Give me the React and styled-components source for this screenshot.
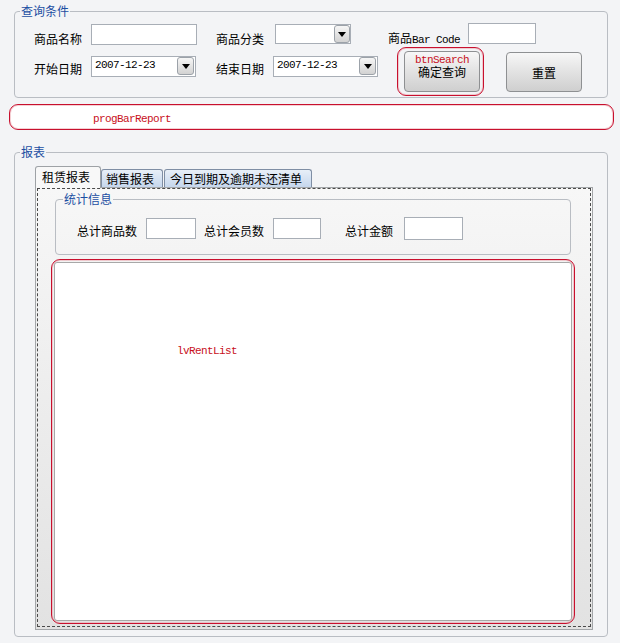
import React from 'react';
import styled, { createGlobalStyle } from 'styled-components';

const GlobalStyle = createGlobalStyle`
  html, body {
    margin: 0;
    padding: 0;
  }
  body {
    background: #f3f4f6;
    font-family: "Noto Sans CJK SC", "Noto Sans", sans-serif;
    font-size: 12px;
    color: #000;
  }
`;

const Page = styled.div`
  width: 620px;
  height: 643px;
  padding-top: 4px;
  box-sizing: border-box;
  overflow: hidden;
`;

const Group = styled.fieldset`
  margin: ${p => p.$top || 0}px 0 0 ${p => p.$left}px;
  width: ${p => p.$width}px;
  height: ${p => p.$height}px;
  box-sizing: border-box;
  padding: ${p => p.$pad};
  border: 1px solid #b9bdc3;
  border-radius: 4px;
  min-width: 0;
  display: flex;
  flex-direction: column;
`;

const Legend = styled.legend`
  margin-left: ${p => p.$offset}px;
  padding: 0 1px;
  line-height: 14px;
  font-size: 12px;
  color: #1b4ea2;
`;

const Row = styled.div`
  display: flex;
  align-items: flex-start;
  height: ${p => p.$h}px;
  padding-left: ${p => p.$pl}px;
`;

const Label = styled.span`
  margin: ${p => p.$top}px 0 0 ${p => p.$left || 0}px;
  line-height: 14px;
  white-space: nowrap;
`;

const Mono = styled.span`
  font-family: "Liberation Mono", "DejaVu Sans Mono", monospace;
  font-size: 11px;
  letter-spacing: -0.6px;
`;

const RedMono = styled(Mono)`
  color: #c8101c;
  line-height: 10px;
`;

const TextBox = styled.div`
  margin: ${p => p.$top}px 0 0 ${p => p.$left}px;
  width: ${p => p.$w}px;
  height: ${p => p.$h}px;
  box-sizing: border-box;
  border: 1px solid #a8aeb6;
  background: #fff;
  display: flex;
  justify-content: space-between;
  align-items: flex-start;
  padding: ${p => p.$pad || 0};
`;

const DateText = styled(Mono)`
  line-height: 13px;
  padding: 2px 0 0 3px;
`;

const DropBtn = styled.span`
  width: ${p => p.$w}px;
  height: ${p => p.$h}px;
  box-sizing: border-box;
  border: 1px solid #9ca2a9;
  border-radius: 3px;
  background: linear-gradient(#f6f6f6, #d2d2d2);
  display: flex;
  align-items: center;
  justify-content: center;

  &::after {
    content: '';
    border-left: 4px solid transparent;
    border-right: 4px solid transparent;
    border-top: 5px solid #000;
  }
`;

const Annot = styled.div`
  box-sizing: border-box;
  border: 1px solid #c8102e;
  border-radius: 9px;
  box-shadow: inset 0 0 0 1px rgba(232, 150, 160, 0.45);
`;

const SearchWrap = styled(Annot)`
  margin-left: 19px;
  width: 87px;
  height: 49px;
  padding: 3px 0 0 6px;
`;

const Button = styled.button`
  margin: ${p => p.$top || 0}px 0 0 ${p => p.$left || 0}px;
  width: 76px;
  height: ${p => p.$h}px;
  box-sizing: border-box;
  border: 1px solid #8e9092;
  border-radius: 4px;
  background: linear-gradient(#f7f7f7, #e2e2e2 50%, #cfcfcf);
  font-family: inherit;
  font-size: 12px;
  color: #000;
  padding: ${p => p.$pad || 0};
  display: flex;
  flex-direction: column;
  align-items: center;
  justify-content: ${p => (p.$pad ? 'flex-start' : 'center')};
  line-height: 13px;
`;

const ButtonText = styled.span`
  line-height: 12px;
  margin-top: 1px;
`;

const Progress = styled(Annot)`
  margin: 6px 0 0 9px;
  width: 605px;
  height: 26px;
  background: #fff;
  padding: 3px 0 0 83px;
  display: flex;
  align-items: center;
`;

const TabControl = styled.div`
  flex: 1;
  display: flex;
  flex-direction: column;
`;

const TabStrip = styled.div`
  display: flex;
  align-items: flex-end;
  height: 21px;
  position: relative;
  z-index: 1;
`;

const Tab = styled.div`
  box-sizing: border-box;
  width: ${p => p.$w}px;
  margin-left: ${p => p.$ml || 0}px;
  padding-left: ${p => p.$pl}px;
  white-space: nowrap;
  display: flex;
  align-items: center;
  border: 1px solid ${p => (p.$active ? '#9ea2a6' : '#7f8ea4')};
  border-radius: 3px 3px 0 0;
  ${p =>
    p.$active
      ? `
    height: 22px;
    margin-bottom: -1px;
    border-bottom: none;
    background: #f8f8f8;
    padding-bottom: 2px;
  `
      : `
    height: 18px;
    border-bottom: none;
    background: linear-gradient(#e8eff8, #c6d7ed);
  `}
`;

const TabPage = styled.div`
  flex: 1;
  display: flex;
  border: 1px solid #a3a6a9;
  background: linear-gradient(#f7f7f7, #e2e2e2);
  padding: 0 1px 2px 1px;
`;

const Dashed = styled.div`
  flex: 1;
  display: flex;
  flex-direction: column;
  border: 1px dashed #4a4a4a;
`;

const ListWrap = styled(Annot)`
  flex: 1;
  margin: 4px 0 2px 13px;
  width: 524px;
  padding: 2px;
  display: flex;
`;

const ListView = styled.div`
  flex: 1;
  background: #fff;
  border: 1px solid #a8a8a8;
  border-radius: 3px;
  padding: 77px 0 0 122px;
`;

export default function App() {
  return (
    <Page>
      <GlobalStyle />
      <Group $left={14} $width={594} $height={94} $pad="5px 0 0 0">
        <Legend $offset={5}>查询条件</Legend>
        <Row $h={24} $pl={19}>
          <Label $top={9}>商品名称</Label>
          <TextBox $top={1} $left={9} $w={106} $h={21} />
          <Label $top={9} $left={19}>商品分类</Label>
          <TextBox $top={1} $left={11} $w={76} $h={20}>
            <span />
            <DropBtn $w={16} $h={18} />
          </TextBox>
          <Label $top={8} $left={37}>
            商品<Mono>Bar Code</Mono>
          </Label>
          <TextBox $top={0} $left={8} $w={68} $h={21} />
        </Row>
        <Row $h={49} $pl={19}>
          <Label $top={15}>开始日期</Label>
          <TextBox $top={9} $left={9} $w={105} $h={21} $pad="0 1px 0 0">
            <DateText>2007-12-23</DateText>
            <DropBtn $w={17} $h={18} />
          </TextBox>
          <Label $top={15} $left={20}>结束日期</Label>
          <TextBox $top={9} $left={9} $w={105} $h={21} $pad="0 1px 0 0">
            <DateText>2007-12-23</DateText>
            <DropBtn $w={17} $h={18} />
          </TextBox>
          <SearchWrap>
            <Button $h={41} $pad="3px 0 0 0">
              <RedMono>btnSearch</RedMono>
              <ButtonText>确定查询</ButtonText>
            </Button>
          </SearchWrap>
          <Button $top={5} $left={22} $h={40}>重置</Button>
        </Row>
      </Group>

      <Progress>
        <RedMono>progBarReport</RedMono>
      </Progress>

      <Group $top={15} $left={14} $width={594} $height={492} $pad="7px 14px 6px 20px">
        <Legend $offset={-15}>报表</Legend>
        <TabControl>
          <TabStrip>
            <Tab $active $w={66} $pl={6}>租赁报表</Tab>
            <Tab $w={62} $pl={4}>销售报表</Tab>
            <Tab $w={148} $ml={1} $pl={5}>今日到期及逾期未还清单</Tab>
          </TabStrip>
          <TabPage>
            <Dashed>
              <Group $top={3} $left={17} $width={516} $height={63} $pad="0">
                <Legend $offset={7}>统计信息</Legend>
                <Row $h={40} $pl={21}>
                  <Label $top={18}>总计商品数</Label>
                  <TextBox $top={12} $left={9} $w={50} $h={21} />
                  <Label $top={18} $left={8}>总计会员数</Label>
                  <TextBox $top={12} $left={9} $w={48} $h={21} />
                  <Label $top={18} $left={24}>总计金额</Label>
                  <TextBox $top={11} $left={11} $w={59} $h={23} />
                </Row>
              </Group>
              <ListWrap>
                <ListView>
                  <RedMono>lvRentList</RedMono>
                </ListView>
              </ListWrap>
            </Dashed>
          </TabPage>
        </TabControl>
      </Group>
    </Page>
  );
}
